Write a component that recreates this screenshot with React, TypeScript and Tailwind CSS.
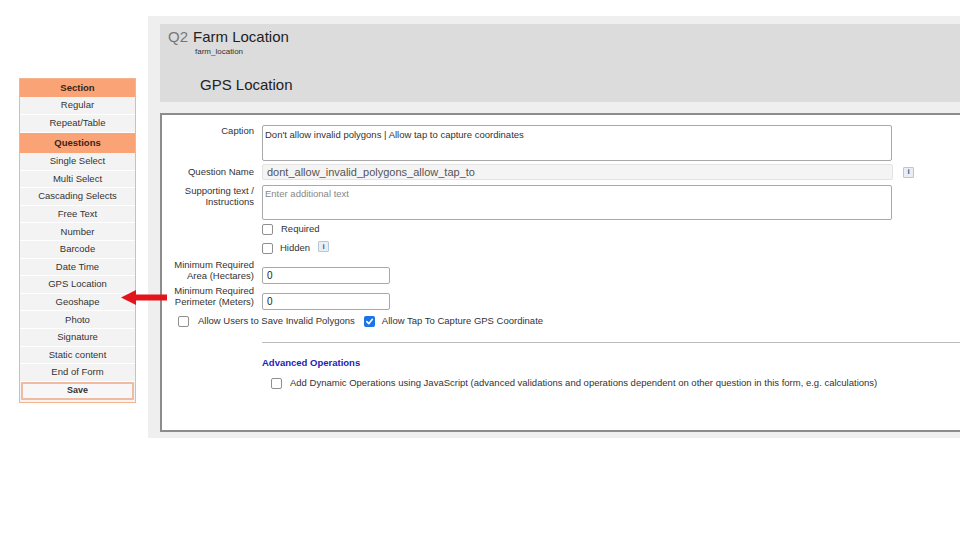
import React from 'react';

const font = { fontFamily: '"Liberation Sans", Arial, Helvetica, sans-serif' };

function Check({ checked = false }: { checked?: boolean }) {
  if (checked) {
    return (
      <span className="inline-flex w-[11px] h-[11px] rounded-[2px] bg-[#1a73e8] items-center justify-center shrink-0">
        <svg width="9" height="9" viewBox="0 0 10 10">
          <path d="M2 5.2 L4.2 7.4 L8.2 2.6" stroke="white" strokeWidth="1.8" fill="none" strokeLinecap="round" strokeLinejoin="round" />
        </svg>
      </span>
    );
  }
  return <span className="inline-block w-[11px] h-[11px] rounded-[2px] border border-[#8f8f8f] bg-white shrink-0" />;
}

function Info() {
  return (
    <span className="flex w-[11px] h-[11px] items-center justify-center border border-[#b9c6d6] bg-[#e9eef5] text-[#3b5d9a] text-[8px] font-bold leading-none rounded-[1px]">
      i
    </span>
  );
}

function Label({ children }: { children: React.ReactNode }) {
  return <div className="w-[92px] shrink-0 text-right text-[9.5px] leading-[10.5px] text-[#333]">{children}</div>;
}

const sectionItems = ['Regular', 'Repeat/Table'];
const questionItems = [
  'Single Select',
  'Multi Select',
  'Cascading Selects',
  'Free Text',
  'Number',
  'Barcode',
  'Date Time',
  'GPS Location',
  'Geoshape',
  'Photo',
  'Signature',
  'Static content',
  'End of Form',
];

function Sidebar() {
  return (
    <div className="mt-[78px] ml-[19px] w-[117px] border border-[#f3b48f] bg-[#f3f3f3] self-start pb-[2px]">
      <div className="h-[18px] bg-[#f9a377] flex items-center justify-center text-[9.5px] font-bold text-[#3b2417]">Section</div>
      {sectionItems.map(s => (
        <div key={s} className="h-[18px] border-b border-white flex items-center justify-center text-[9.5px] text-[#333]">{s}</div>
      ))}
      <div className="h-[20px] bg-[#f9a377] flex items-center justify-center text-[9.5px] font-bold text-[#3b2417]">Questions</div>
      {questionItems.map(s => (
        <div key={s} className="h-[17.6px] border-b border-white flex items-center justify-center text-[9.5px] text-[#333]">{s}</div>
      ))}
      <div className="mx-[1px] h-[18px] border-2 border-[#efbba3] bg-[#f7f7f7] flex items-center justify-center text-[9px] font-bold text-[#333]">Save</div>
    </div>
  );
}

export default function App() {
  return (
    <div className="w-[960px] h-[540px] bg-white flex relative overflow-hidden" style={font}>
      <Sidebar />

      <svg className="absolute left-[121px] top-[290px]" width="46" height="15" viewBox="0 0 46 15">
        <polygon points="0,7.5 15,0 15,4.5 46,4.5 46,10.5 15,10.5 15,15" fill="#e3141b" />
      </svg>

      <div className="ml-[12px] mt-[16px] h-[422px] flex-1 bg-[#efefef] pt-[8px] pl-[12px] flex flex-col">
        <div className="h-[78px] bg-[#dcdcdc] pl-[8px] pt-[4px]">
          <div className="flex items-baseline gap-[5px] leading-[18px]">
            <span className="text-[15px] text-[#777]">Q2</span>
            <span className="text-[15px] text-[#222]">Farm Location</span>
          </div>
          <div className="ml-[27px] mt-[1px] text-[8px] leading-[10px] text-[#333]">farm_location</div>
          <div className="ml-[32px] mt-[19px] text-[15px] leading-[18px] text-[#222]">GPS Location</div>
        </div>

        <div className="mt-[11px] h-[319px] bg-white border-2 border-r-0 border-[#8c8c8c] pt-[10px] text-[#333]">
          <div className="flex gap-[8px]">
            <div className="pt-[1px]"><Label>Caption</Label></div>
            <div className="w-[630px] h-[36px] border border-[#a9a9a9] rounded-[2px] pl-[2px] pt-[3px] text-[9.5px] leading-[11px]">
              Don't allow invalid polygons | Allow tap to capture coordinates
            </div>
          </div>

          <div className="flex gap-[8px] mt-[3px] items-center h-[16px]">
            <Label>Question Name</Label>
            <div className="w-[631px] h-[16px] border border-[#e3e3e3] bg-[#f4f4f4] rounded-[2px] px-[4px] flex items-center text-[11px] leading-[12px] text-[#555]">
              dont_allow_invalid_polygons_allow_tap_to
            </div>
            <div className="ml-[2px] flex"><Info /></div>
          </div>

          <div className="flex gap-[8px] mt-[5px]">
            <div className="pt-[1px]"><Label>Supporting text /<br />Instructions</Label></div>
            <div className="w-[630px] h-[35px] border border-[#a9a9a9] rounded-[2px] pl-[2px] pt-[2px] text-[9.5px] leading-[11px] text-[#888]">
              Enter additional text
            </div>
          </div>

          <div className="ml-[100px] mt-[4px] flex items-center gap-[8px] h-[11px] text-[9.5px]">
            <Check />
            <span>Required</span>
          </div>
          <div className="ml-[100px] mt-[8px] flex items-center gap-[7px] h-[11px] text-[9.5px]">
            <Check />
            <span>Hidden</span>
            <span className="ml-[1px] mb-[4px] flex"><Info /></span>
          </div>

          <div className="flex gap-[8px] mt-[6px] items-start">
            <Label>Minimum Required<br />Area (Hectares)</Label>
            <div className="mt-[7px] w-[128px] h-[17px] border border-[#a9a9a9] rounded-[2px] px-[4px] flex items-center text-[10px] text-[#222]">0</div>
          </div>
          <div className="flex gap-[8px] mt-[2px] items-start">
            <Label>Minimum Required<br />Perimeter (Meters)</Label>
            <div className="mt-[7px] w-[128px] h-[17px] border border-[#a9a9a9] rounded-[2px] px-[4px] flex items-center text-[10px] text-[#222]">0</div>
          </div>

          <div className="ml-[16px] mt-[6px] flex items-center h-[11px] text-[9.5px]">
            <Check />
            <span className="ml-[9px]">Allow Users to Save Invalid Polygons</span>
            <span className="ml-[9px] flex"><Check checked /></span>
            <span className="ml-[7px]">Allow Tap To Capture GPS Coordinate</span>
          </div>

          <div className="ml-[100px] mt-[15px] border-t border-[#bbb]" />

          <div className="ml-[100px] mt-[14px] text-[9.5px] leading-[11px] font-bold text-[#2323b5]">Advanced Operations</div>
          <div className="ml-[109px] mt-[10px] flex items-center gap-[8px] h-[11px] text-[9.5px]">
            <Check />
            <span>Add Dynamic Operations using JavaScript (advanced validations and operations dependent on other question in this form, e.g. calculations)</span>
          </div>
        </div>
      </div>
    </div>
  );
}
